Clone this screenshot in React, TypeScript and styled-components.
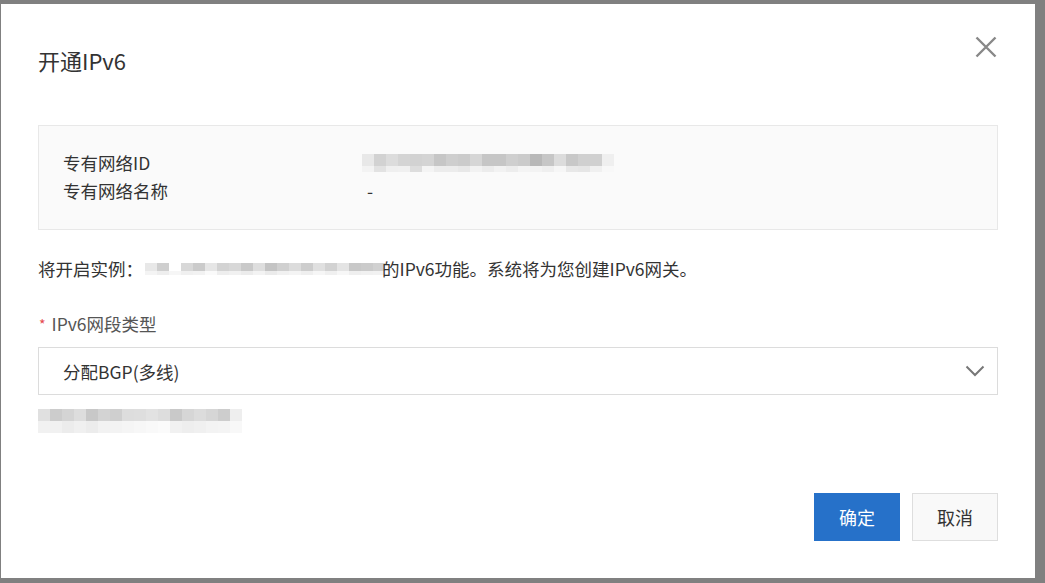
import styled, { createGlobalStyle } from "styled-components";

const GlobalStyle = createGlobalStyle`
  html, body {
    margin: 0;
    padding: 0;
    background: #808080;
    font-family: "Noto Sans CJK SC", "Liberation Sans", sans-serif;
    color: #333;
  }
`;

const Backdrop = styled.div`
  width: 1045px;
  height: 583px;
  overflow: hidden;
  padding: 4px 0 0 1px;
  box-sizing: border-box;
`;

const Dialog = styled.div`
  width: 1034px;
  height: 574px;
  background: #fff;
  box-sizing: border-box;
  padding: 0 37px 37px;
  display: flex;
  flex-direction: column;
`;

const Header = styled.div`
  display: flex;
  justify-content: space-between;
  align-items: flex-start;
  height: 121px;
  padding-top: 33px;
  box-sizing: border-box;
`;

const Title = styled.h2`
  margin: 8px 0 0;
  font-size: 22px;
  line-height: 30px;
  font-weight: 400;
  color: #333;
`;

const CloseButton = styled.button`
  width: 22px;
  height: 22px;
  padding: 0;
  margin-right: 1px;
  margin-top: -1px;
  border: 0;
  background: transparent;
  cursor: pointer;
  color: #888;
  display: flex;
`;

const InfoBox = styled.div`
  background: #fafafa;
  border: 1px solid #e8e8e8;
  padding: 23px 24px 24px;
  display: grid;
  grid-template-columns: 299px 1fr;
  font-size: 17.5px;
  line-height: 28px;
`;

const InfoValue = styled.div<{ $indent?: number }>`
  display: flex;
  align-items: center;
  padding-left: ${(p) => p.$indent ?? 0}px;
`;

const Redacted = styled.div<{ $cols: number }>`
  display: grid;
  grid-template-columns: repeat(${(p) => p.$cols}, 12px);
`;

const Pixel = styled.span<{ $h: number }>`
  display: block;
  height: ${(p) => p.$h}px;
`;

const Description = styled.p`
  margin: 27px 0 0;
  font-size: 17.5px;
  line-height: 24px;
  display: flex;
  align-items: center;
  color: #333;
`;

const DescGap = styled.span`
  display: inline-flex;
  margin: 0 -3px 0 2px;
`;

const FieldLabel = styled.div`
  margin-top: 31px;
  font-size: 17.5px;
  line-height: 24px;
  color: #555;
  display: flex;
  align-items: center;
`;

const Required = styled.span`
  color: #e5484d;
  font-size: 14px;
  margin: 0 6px 0 1px;
`;

const Select = styled.div`
  margin-top: 11px;
  height: 48px;
  box-sizing: border-box;
  border: 1px solid #dcdcdc;
  background: #fff;
  display: flex;
  align-items: center;
  justify-content: space-between;
  padding: 0 12px 0 24px;
  font-size: 17.5px;
  color: #333;
`;

const Helper = styled.div`
  margin-top: 14px;
`;

const Footer = styled.div`
  margin-top: auto;
  display: flex;
  justify-content: flex-end;
  gap: 12px;
`;

const Button = styled.button<{ $primary?: boolean }>`
  width: 86px;
  height: 48px;
  box-sizing: border-box;
  font-family: inherit;
  font-size: 18px;
  cursor: pointer;
  border: 1px solid ${(p) => (p.$primary ? "#2671c9" : "#dedede")};
  background: ${(p) => (p.$primary ? "#2671c9" : "#f9f9f9")};
  color: ${(p) => (p.$primary ? "#fff" : "#333")};
`;

type Block = [string, string];

function Mosaic({ blocks, top, bottom }: { blocks: Block[]; top: number; bottom: number }) {
  return (
    <Redacted $cols={blocks.length}>
      {blocks.map((b, i) => (
        <Pixel key={"t" + i} $h={top} style={{ background: b[0] }} />
      ))}
      {blocks.map((b, i) => (
        <Pixel key={"b" + i} $h={bottom} style={{ background: b[1] }} />
      ))}
    </Redacted>
  );
}

const vpcId: Block[] = [
  ["#e8e8e8", "#f3f3f3"], ["#d2d2d2", "#e2e2e2"], ["#dcdcdc", "#efefef"],
  ["#d4d4d4", "#f0f0f0"], ["#d2d2d2", "#dddddd"], ["#d4d4d4", "#f4f4f4"],
  ["#c6c6c6", "#ececec"], ["#cecece", "#ececec"], ["#cbcbcb", "#e8e8e8"],
  ["#d6d6d6", "#f2f2f2"], ["#c6c6c6", "#ececec"], ["#c6c6c6", "#f2f2f2"],
  ["#cfcfcf", "#ededed"], ["#cbcbcb", "#f4f4f4"], ["#b8b8b8", "#f3f3f3"],
  ["#c6c6c6", "#efefef"], ["#dcdcdc", "#f6f6f6"], ["#c8c8c8", "#e8e8e8"],
  ["#d0d0d0", "#e6e6e6"], ["#d0d0d0", "#f0f0f0"], ["#efefef", "#f8f8f8"],
];

const instance: Block[] = [
  ["#e8e8e8", "#f4f4f4"], ["#cfcfcf", "#eeeeee"], ["#ffffff", "#f6f6f6"],
  ["#d8d8d8", "#f0f0f0"], ["#cbcbcb", "#f2f2f2"], ["#e6e6e6", "#fafafa"],
  ["#d3d3d3", "#eeeeee"], ["#d8d8d8", "#f1f1f1"], ["#c9c9c9", "#ececec"],
  ["#dedede", "#f3f3f3"], ["#c4c4c4", "#ebebeb"], ["#d0d0d0", "#f1f1f1"],
  ["#dcdcdc", "#f4f4f4"], ["#cdcdcd", "#efefef"], ["#e0e0e0", "#f6f6f6"],
  ["#d2d2d2", "#f0f0f0"], ["#e4e4e4", "#f7f7f7"], ["#c8c8c8", "#efefef"],
  ["#cbcbcb", "#f1f1f1"], ["#d1d1d1", "#f2f2f2"],
];

const helper: Block[] = [
  ["#e0e0e0", "#f1f1f1"], ["#cccccc", "#f1f1f1"], ["#d4d4d4", "#ececec"],
  ["#dddddd", "#f0f0f0"], ["#c8c8c8", "#ececec"], ["#d3d3d3", "#f2f2f2"],
  ["#cfcfcf", "#f3f3f3"], ["#dddddd", "#f5f5f5"], ["#dedede", "#f7f7f7"],
  ["#e2e2e2", "#f9f9f9"], ["#dddddd", "#fbfbfb"], ["#c9c9c9", "#f1f1f1"],
  ["#d6d6d6", "#eeeeee"], ["#dcdcdc", "#f0f0f0"], ["#d6d6d6", "#f3f3f3"],
  ["#cdcdcd", "#f4f4f4"], ["#eeeeee", "#f8f8f8"],
];

export default function App() {
  return (
    <>
      <GlobalStyle />
      <Backdrop>
        <Dialog>
          <Header>
            <Title>开通IPv6</Title>
            <CloseButton aria-label="关闭">
              <svg width="22" height="22" viewBox="0 0 22 22" fill="none">
                <path
                  d="M1.5 1.5 L20.5 20.5 M20.5 1.5 L1.5 20.5"
                  stroke="currentColor"
                  strokeWidth="2.4"
                />
              </svg>
            </CloseButton>
          </Header>

          <InfoBox>
            <div>专有网络ID</div>
            <InfoValue $indent={-2}>
              <Mosaic blocks={vpcId} top={12} bottom={6} />
            </InfoValue>
            <div>专有网络名称</div>
            <InfoValue $indent={5}>-</InfoValue>
          </InfoBox>

          <Description>
            将开启实例：
            <DescGap>
              <Mosaic blocks={instance} top={8} bottom={4} />
            </DescGap>
            的IPv6功能。系统将为您创建IPv6网关。
          </Description>

          <FieldLabel>
            <Required>*</Required>
            IPv6网段类型
          </FieldLabel>
          <Select>
            <span>分配BGP(多线)</span>
            <svg width="20" height="12" viewBox="0 0 20 12" fill="none">
              <path d="M1.5 1.5 L10 10 L18.5 1.5" stroke="#777" strokeWidth="2" />
            </svg>
          </Select>
          <Helper>
            <Mosaic blocks={helper} top={12} bottom={12} />
          </Helper>

          <Footer>
            <Button $primary>确定</Button>
            <Button>取消</Button>
          </Footer>
        </Dialog>
      </Backdrop>
    </>
  );
}
